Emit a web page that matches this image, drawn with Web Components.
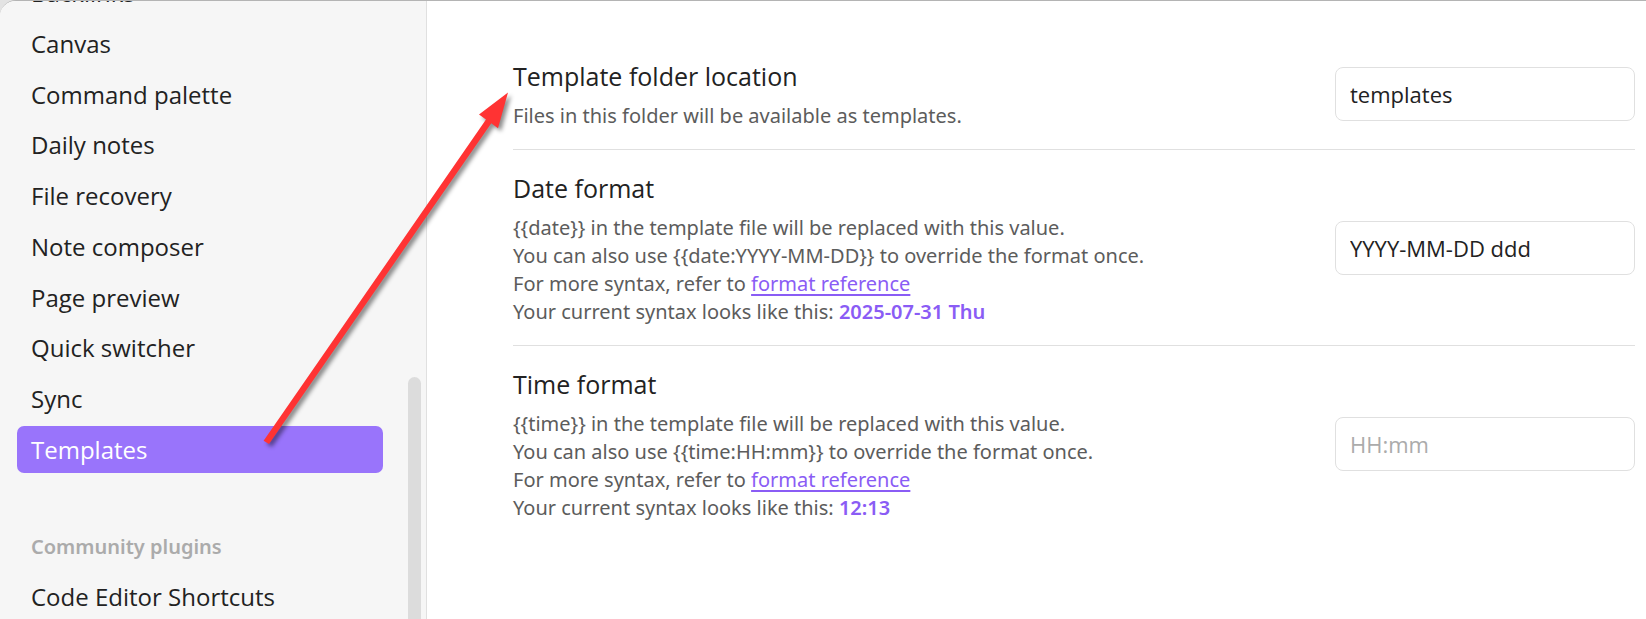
<!DOCTYPE html>
<html lang="en">
<head>
<meta charset="utf-8">
<title>Settings – Templates</title>
<style>
  :root {
    --text: #222222;
    --muted: #5c5c5c;
    --faint: #ababab;
    --accent: #8a5cf5;
    --accent-fill: #9974fb;
    --border: #e0e0e0;
    --panel: #f6f6f6;
    --font: "Open Sans", "Noto Sans", sans-serif;
    --font-small: "Noto Sans", "Open Sans", sans-serif;
  }
  html, body { height: 100%; }
  body {
    margin: 0;
    overflow: hidden;
    background: #e3e3e3;
    color: var(--text);
    font-family: var(--font);
  }
  setting-row a { color: var(--accent); text-decoration-thickness: 2px; text-underline-offset: 3px; }
  setting-row b { color: var(--accent); font-weight: 600; }
</style>
</head>
<body>
<settings-window>
  <settings-sidebar slot="sidebar">
    <nav-group class="core">
      <nav-item>Backlinks</nav-item>
      <nav-item>Canvas</nav-item>
      <nav-item>Command palette</nav-item>
      <nav-item>Daily notes</nav-item>
      <nav-item>File recovery</nav-item>
      <nav-item>Note composer</nav-item>
      <nav-item>Page preview</nav-item>
      <nav-item>Quick switcher</nav-item>
      <nav-item>Sync</nav-item>
      <nav-item active>Templates</nav-item>
    </nav-group>
    <nav-group heading="Community plugins">
      <nav-item>Code Editor Shortcuts</nav-item>
    </nav-group>
  </settings-sidebar>

  <setting-row name="Template folder location" value="templates">
    <div>Files in this folder will be available as templates.</div>
  </setting-row>
  <setting-row name="Date format" value="YYYY-MM-DD ddd">
    <div>{{date}} in the template file will be replaced with this value.</div>
    <div>You can also use {{date:YYYY-MM-DD}} to override the format once.</div>
    <div>For more syntax, refer to <a href="#format">format reference</a></div>
    <div>Your current syntax looks like this: <b>2025-07-31 Thu</b></div>
  </setting-row>
  <setting-row name="Time format" placeholder="HH:mm">
    <div>{{time}} in the template file will be replaced with this value.</div>
    <div>You can also use {{time:HH:mm}} to override the format once.</div>
    <div>For more syntax, refer to <a href="#format">format reference</a></div>
    <div>Your current syntax looks like this: <b>12:13</b></div>
  </setting-row>

  <pointer-arrow slot="overlay"></pointer-arrow>
</settings-window>

<script>
  function define(name, html, setup) {
    const template = document.createElement('template');
    template.innerHTML = html;
    customElements.define(name, class extends HTMLElement {
      connectedCallback() {
        if (this.shadowRoot) return;
        this.attachShadow({ mode: 'open' }).append(template.content.cloneNode(true));
        if (setup) setup(this, this.shadowRoot);
      }
    });
  }

  define('settings-window', `
    <style>
      :host {
        display: grid;
        grid-template-columns: 427px minmax(0, 1fr);
        position: relative;
        box-sizing: border-box;
        height: 100%;
        overflow: hidden;
        border-top: 1px solid #b4b4b4;
        border-top-left-radius: 16px;
        background: #ffffff;
      }
      main { padding: 37px 11px 0 86px; }
    </style>
    <slot name="sidebar"></slot>
    <main><slot></slot></main>
    <slot name="overlay"></slot>
  `);

  define('settings-sidebar', `
    <style>
      :host {
        display: flex;
        box-sizing: border-box;
        min-height: 0;
        overflow: hidden;
        background: var(--panel);
        border-right: 1px solid var(--border);
      }
      nav {
        flex: 1;
        display: flex;
        flex-direction: column;
        gap: 52px;
        margin-top: -32px; /* the list is scrolled past its first entry */
        padding: 0 25px 0 17px;
      }
      .track { display: flex; width: 13px; padding: 376px 5px 0 0; }
      .thumb { flex: 1; border-radius: 7px 7px 0 0; background: #dcdcdc; }
    </style>
    <nav aria-label="Settings"><slot></slot></nav>
    <div class="track"><div class="thumb"></div></div>
  `);

  define('nav-group', `
    <style>
      :host {
        display: flex;
        flex-direction: column;
        flex-shrink: 0;
        gap: 4px;
      }
      :host(.core) { height: 504px; gap: 0; justify-content: space-between; }
      h2 {
        margin: 0;
        padding: 0 14px;
        color: var(--faint);
        font: 600 20px/44px var(--font-small);
      }
    </style>
    <slot></slot>
  `, (host, root) => {
    const text = host.getAttribute('heading');
    if (!text) return;
    const heading = document.createElement('h2');
    heading.textContent = text;
    root.querySelector('slot').before(heading);
  });

  define('nav-item', `
    <style>
      :host { display: block; }
      button {
        display: block;
        width: 100%;
        margin: 0;
        padding: 0 14px;
        border: 0;
        border-radius: 7px;
        background: none;
        color: inherit;
        font: 24px/47px var(--font);
        text-align: left;
      }
      :host([active]) button { background: var(--accent-fill); color: #ffffff; }
    </style>
    <button type="button"><slot></slot></button>
  `);

  define('setting-row', `
    <style>
      :host {
        display: flex;
        align-items: center;
        gap: 32px;
        padding: 19px 0;
        border-top: 1px solid var(--border);
      }
      :host(:first-of-type) { border-top: 0; }
      .info { flex: 1; min-width: 0; padding-top: 2px; }
      label { display: block; margin-bottom: 8px; font-size: 25px; line-height: 35px; }
      .description { color: var(--muted); font: 20px/28px var(--font-small); }
      input {
        box-sizing: border-box;
        width: 300px;
        height: 54px;
        padding: 0 14px;
        border: 1px solid var(--border);
        border-radius: 8px;
        background: #ffffff;
        color: var(--text);
        font: 22px var(--font);
      }
      input::placeholder { color: var(--faint); opacity: 1; }
    </style>
    <div class="info">
      <label for="field"></label>
      <div class="description"><slot></slot></div>
    </div>
    <input id="field" type="text">
  `, (host, root) => {
    root.querySelector('label').textContent = host.getAttribute('name');
    const input = root.querySelector('input');
    input.value = host.getAttribute('value') || '';
    input.placeholder = host.getAttribute('placeholder') || '';
  });

  define('pointer-arrow', `
    <style>
      :host { position: absolute; left: 256px; top: 84px; pointer-events: none; }
      svg { display: block; overflow: visible; filter: drop-shadow(3px 3px 2px rgba(0, 0, 0, 0.45)); }
    </style>
    <svg width="260" height="370" viewBox="256 85 260 370" aria-hidden="true">
      <path fill="#ff3333" d="M508 92.500 L498 128.300 L491.300 123.200 L269 444 L263.600 440.800 L486 119.600 L479 114.500 Z"/>
    </svg>
  `);
</script>
</body>
</html>
